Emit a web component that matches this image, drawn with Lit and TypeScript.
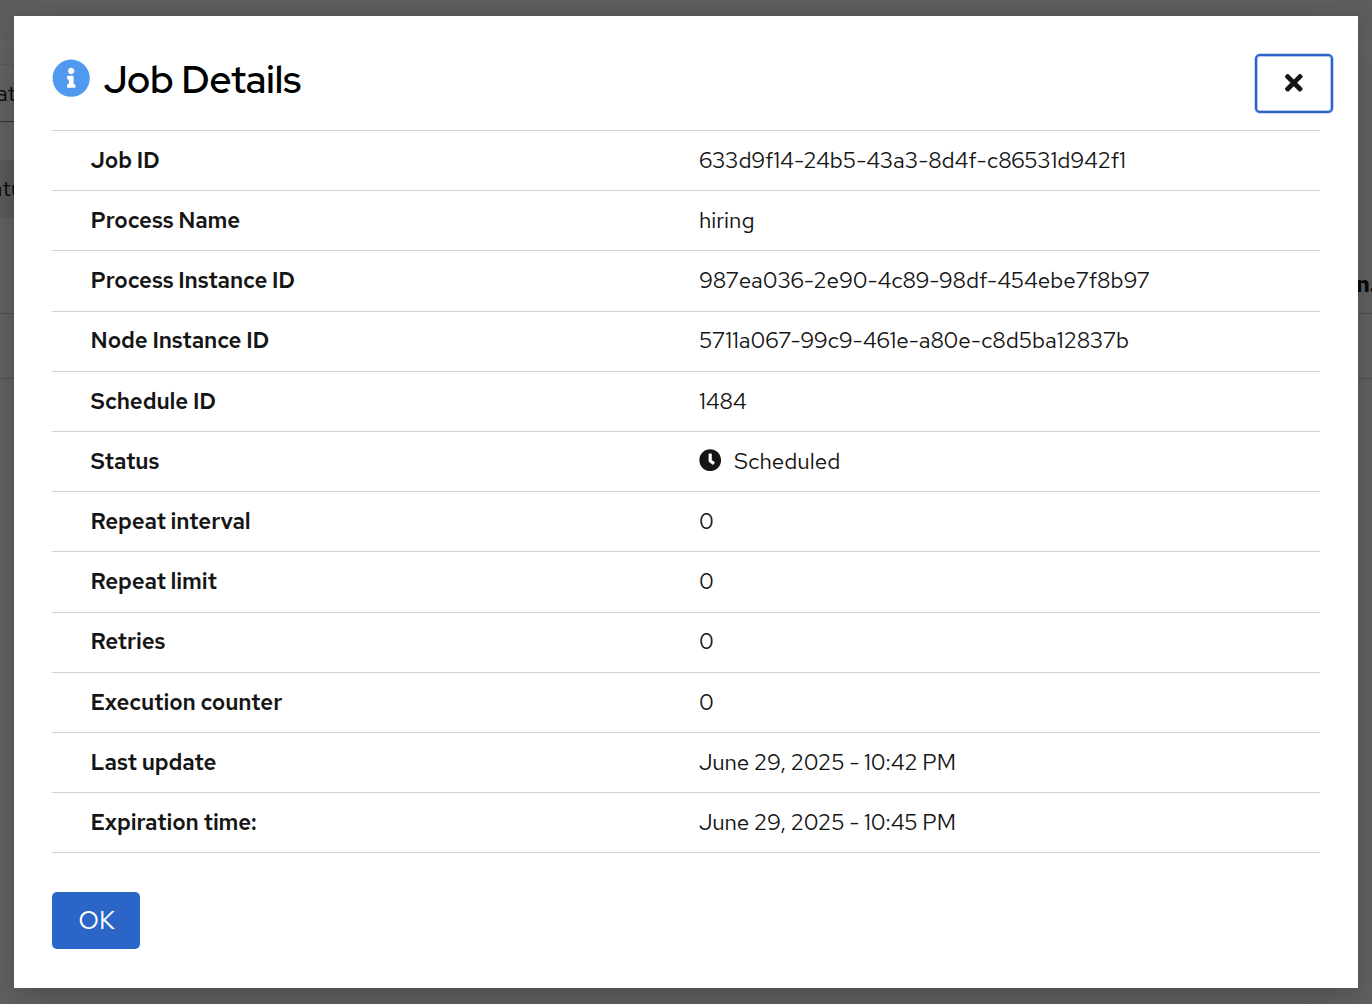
import { LitElement, html, css, svg, nothing } from "lit";
import { customElement } from "lit/decorators.js";

interface Detail {
  label: string;
  value: string;
  kind?: "status" | "date" | "id";
}

const DETAILS: Detail[] = [
  { label: "Job ID", value: "633d9f14-24b5-43a3-8d4f-c86531d942f1", kind: "id" },
  { label: "Process Name", value: "hiring" },
  { label: "Process Instance ID", value: "987ea036-2e90-4c89-98df-454ebe7f8b97", kind: "id" },
  { label: "Node Instance ID", value: "5711a067-99c9-461e-a80e-c8d5ba12837b", kind: "id" },
  { label: "Schedule ID", value: "1484" },
  { label: "Status", value: "Scheduled", kind: "status" },
  { label: "Repeat interval", value: "0" },
  { label: "Repeat limit", value: "0" },
  { label: "Retries", value: "0" },
  { label: "Execution counter", value: "0" },
  { label: "Last update", value: "June 29, 2025 - 10:42 PM", kind: "date" },
  { label: "Expiration time:", value: "June 29, 2025 - 10:45 PM", kind: "date" },
];

const infoIcon = svg`<svg class="info" viewBox="0 0 512 512" aria-hidden="true"><path fill="currentColor" d="M256 8C119.043 8 8 119.083 8 256c0 136.997 111.043 248 248 248s248-111.003 248-248C504 119.083 392.957 8 256 8zm0 110c23.196 0 42 18.804 42 42s-18.804 42-42 42-42-18.804-42-42 18.804-42 42-42zm56 254c0 6.627-5.373 12-12 12h-88c-6.627 0-12-5.373-12-12v-24c0-6.627 5.373-12 12-12h12v-64h-12c-6.627 0-12-5.373-12-12v-24c0-6.627 5.373-12 12-12h64c6.627 0 12 5.373 12 12v100h12c6.627 0 12 5.373 12 12v24z"/></svg>`;

const clockIcon = svg`<svg class="clock" viewBox="0 0 512 512" aria-hidden="true"><path fill="currentColor" d="M256 8C119 8 8 119 8 256s111 248 248 248 248-111 248-248S393 8 256 8zm57.100 350.100L224.900 294c-3.100-2.300-4.900-5.900-4.900-9.700V116c0-6.600 5.400-12 12-12h48c6.600 0 12 5.400 12 12v137.700l63.500 46.200c5.400 3.900 6.500 11.400 2.600 16.800l-28.200 38.800c-3.900 5.300-11.400 6.500-16.800 2.600z"/></svg>`;

const timesIcon = svg`<svg class="times" viewBox="0 0 352 512" aria-hidden="true"><path fill="currentColor" d="M242.720 256l100.070-100.070c12.280-12.280 12.280-32.190 0-44.480l-22.240-22.240c-12.280-12.280-32.190-12.280-44.480 0L176 189.280 75.930 89.210c-12.280-12.280-32.190-12.280-44.480 0L9.210 111.450c-12.280 12.280-12.280 32.190 0 44.480L109.280 256 9.210 356.070c-12.280 12.280-12.280 32.190 0 44.480l22.240 22.240c12.280 12.280 32.200 12.280 44.480 0L176 322.720l100.070 100.070c12.280 12.280 32.200 12.280 44.480 0l22.240-22.240c12.280-12.280 12.280-32.190 0-44.480L242.720 256z"/></svg>`;

@customElement("app-root")
export class AppRoot extends LitElement {
  static styles = css`
    :host {
      display: block;
      position: relative;
      height: 1004px;
      overflow: hidden;
      font-family: "Red Hat Text", Lato, "Open Sans", sans-serif;
      font-size: 22.4px;
      color: #151515;
    }
    * { box-sizing: border-box; }
    .page {
      height: 1004px;
      display: flex;
      flex-direction: column;
      background: #626262;
      color: #0b0b0b;
    }
    .masthead { height: 39px; background: #5e5e5e; }
    .strip {
      height: 26px;
      background: linear-gradient(#5a5a5a, #5a5a5a) left bottom / 14px 1px no-repeat;
    }
    .field {
      height: 57px;
      padding-top: 14px;
      line-height: 28px;
      background: linear-gradient(#343434, #343434) left bottom / 14px 1px no-repeat;
    }
    .gap { height: 38px; }
    .chips {
      height: 58px;
      background: linear-gradient(#5b5b5b, #5b5b5b) left / 14px 100% no-repeat;
      padding-top: 14px;
      line-height: 28px;
    }
    .head {
      height: 96px;
      border-bottom: 1px solid #505050;
      display: flex;
      justify-content: flex-end;
      padding-top: 52px;
      line-height: 28px;
      font-weight: 700;
    }
    .line { height: 65px; border-bottom: 1px solid #505050; }
    .cut-left { display: block; width: 16px; direction: rtl; white-space: nowrap; }
    .cut-left.wide { width: 23px; }
    .cut-right { width: 16px; white-space: nowrap; }
    .modal {
      position: absolute;
      left: 14px;
      top: 16px;
      width: 1344px;
      height: 972px;
      background: #fff;
      box-shadow: 0 25.6px 51.2px rgba(3, 3, 3, 0.16), 0 0 12.8px rgba(3, 3, 3, 0.1);
      display: flex;
      flex-direction: column;
      align-items: flex-start;
      padding: 38px 38px 0;
    }
    header {
      width: 1281px;
      height: 76px;
      flex: none;
      display: flex;
      align-items: flex-start;
    }
    .info { width: 38.4px; height: 38.4px; margin-top: 5px; color: #4f99ee; flex: none; }
    h1 {
      margin: 3px 0 0 13px;
      flex: 1;
      font-family: "Red Hat Display", "Red Hat Text", Lato, sans-serif;
      font-size: 38.4px;
      line-height: 46px;
      font-weight: 600;
      color: #000;
    }
    .close {
      width: 78px;
      height: 59px;
      padding: 0 0 2px;
      display: flex;
      align-items: center;
      justify-content: center;
      background: #fff;
      color: #151515;
      border: 2px solid #2b62c6;
      border-radius: 5px;
      box-shadow: 0 0 0 0.600px #9db8ea, inset 0 0 0 1px #b4c8ef;
    }
    .times { width: 17.600px; height: 25.600px; }
    .details {
      width: 1268px;
      margin: 0;
      display: flex;
      flex-direction: column;
      border-bottom: 1px solid #d2d2d2;
    }
    .row {
      display: grid;
      grid-template-columns: 608.300px 1fr;
      height: 60.2px;
      padding: 14.860px 0 0 38.600px;
      border-top: 1px solid #d2d2d2;
      line-height: 28px;
      white-space: nowrap;
    }
    dt { font-weight: 600; letter-spacing: -0.130px; }
    dd { margin: 0; display: flex; }
    .id { letter-spacing: -0.080px; }
    .date { letter-spacing: -0.120px; word-spacing: -0.400px; }
    .clock { width: 22.400px; height: 22.400px; margin: 2.300px 12.600px 0 0; }
    .ok {
      width: 88px;
      height: 57px;
      margin-top: 39px;
      padding: 0 0 1px 1px;
      border: 0;
      border-radius: 5px;
      background: #2b65c7;
      color: #fff;
      font: 400 25.6px/36px "Red Hat Text", Lato, sans-serif;
    }
  `;

  private row(d: Detail) {
    return html`<div class="row">
      <dt>${d.label}</dt>
      <dd class=${d.kind ?? "plain"}>${d.kind === "status" ? clockIcon : nothing}<span>${d.value}</span></dd>
    </div>`;
  }

  render() {
    return html`
      <div class="page">
        <div class="masthead"></div>
        <div class="strip"></div>
        <div class="field"><span class="cut-left">Stat</span></div>
        <div class="gap"></div>
        <div class="chips"><span class="cut-left wide">Statu</span></div>
        <div class="head"><span class="cut-right">n...</span></div>
        <div class="line"></div>
      </div>
      <section class="modal" role="dialog" aria-label="Job Details">
        <header>
          ${infoIcon}
          <h1>Job Details</h1>
          <button class="close" aria-label="Close">${timesIcon}</button>
        </header>
        <dl class="details">${DETAILS.map((d) => this.row(d))}</dl>
        <button class="ok">OK</button>
      </section>
    `;
  }
}
